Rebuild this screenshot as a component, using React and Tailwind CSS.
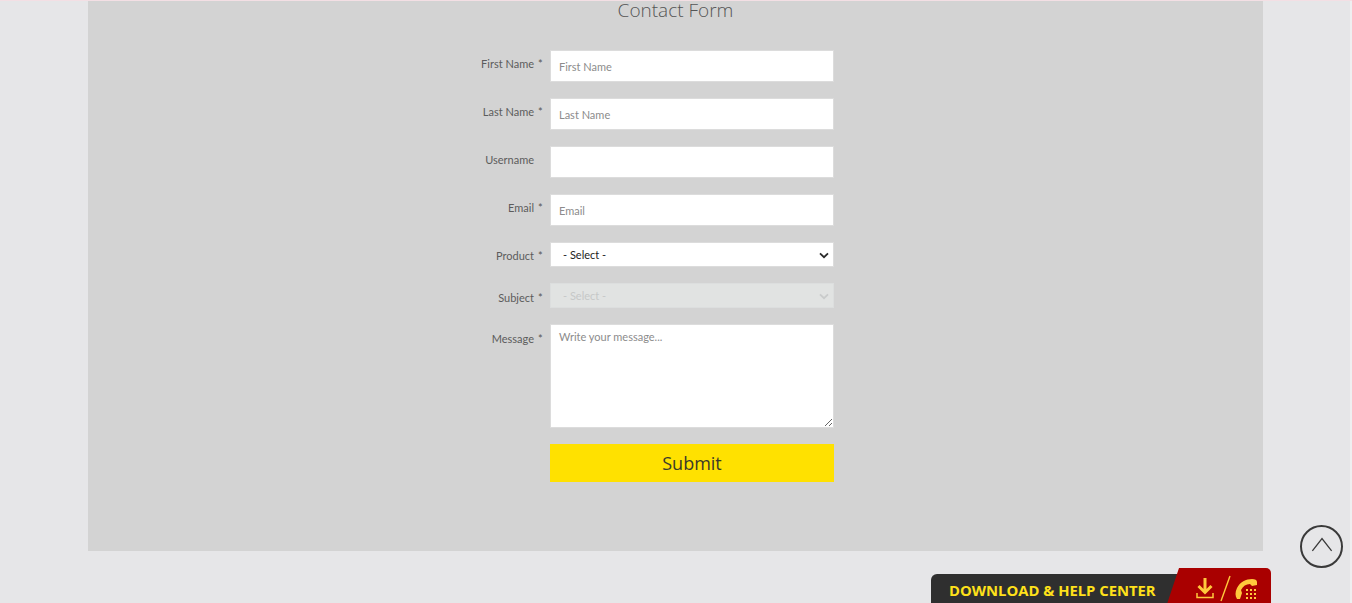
function Label({ text, required, className = "" }) {
  return (
    <div className={`w-[456px] shrink-0 flex justify-end font-['Lato',sans-serif] text-[11px] leading-[16px] text-[#5c5c5c] ${className}`}>
      <span>{text}</span>
      <span className="w-[10px] pl-[4px] text-left text-[#555]">{required ? "*" : ""}</span>
    </div>
  );
}

function InputRow({ label, placeholder, required = true }) {
  return (
    <div className="flex h-[48px] items-start">
      <Label text={label} required={required} className="pt-[6px]" />
      <input
        placeholder={placeholder}
        className="ml-[6px] w-[284px] h-[32px] bg-white border border-[#dcdcdc] px-[8px] pt-[1px] font-['Lato',sans-serif] text-[11px] outline-none placeholder:text-[#8c8c8c]"
      />
    </div>
  );
}

function Chevron({ color }) {
  return (
    <svg viewBox="0 0 12 8" className="w-[10px] h-[7px]">
      <path d="M1.200 1.500 6 6l4.800-4.500" fill="none" stroke={color} strokeWidth="2.200" />
    </svg>
  );
}

function SelectRow({ label, disabled, pt }) {
  return (
    <div className="flex items-start h-[41px]">
      <Label text={label} required className={pt} />
      <div
        className={`ml-[6px] w-[284px] h-[25px] flex items-center justify-between pl-[12px] pr-[4px] pt-[1px] font-['Lato',sans-serif] text-[11px] border ${
          disabled ? "bg-[#e1e3e2] border-[#dcdede] text-[#c6c8c8]" : "bg-white border-[#dcdcdc] text-[#222]"
        }`}
      >
        <span>- Select -</span>
        <Chevron color={disabled ? "#c9cbcb" : "#2a2a2a"} />
      </div>
    </div>
  );
}

export default function App() {
  return (
    <div
      className="relative h-[603px] w-[1352px] overflow-hidden bg-[#e6e6e8] border-t border-[#f3dfe4]"
      style={{ fontFamily: '"Open Sans", "Noto Sans", "Liberation Sans", sans-serif' }}
    >
      <div className="ml-[88px] w-[1175px] h-[550px] bg-[#d3d3d3]">
        <h2 className="h-[49px] text-center text-[19px] leading-[19px] font-light text-[#555]">Contact Form</h2>
        <form className="flex flex-col">
          <InputRow label="First Name" placeholder="First Name" />
          <InputRow label="Last Name" placeholder="Last Name" />
          <InputRow label="Username" required={false} />
          <InputRow label="Email" placeholder="Email" />
          <SelectRow label="Product" pt="pt-[6px]" />
          <SelectRow label="Subject" disabled pt="pt-[7px]" />
          <div className="flex items-start h-[120px]">
            <Label text="Message" required className="pt-[7px]" />
            <textarea
              placeholder="Write your message..."
              className="block ml-[6px] w-[284px] h-[104px] bg-white border border-[#dcdcdc] px-[8px] py-[4px] font-['Lato',sans-serif] text-[11px] outline-none placeholder:text-[#8c8c8c]"
            />
          </div>
          <div className="ml-[462px] w-[284px] h-[38px] bg-[#ffe100] flex items-center justify-center text-[18px] text-[#3a3a2a]">
            Submit
          </div>
        </form>
      </div>

      <div className="absolute right-0 top-0 w-[2px] h-[603px] bg-[#efeff0]" />

      <div className="absolute left-[1300px] top-[524px] w-[43px] h-[43px] rounded-full border-2 border-[#3a3a3a] flex items-center justify-center">
        <svg viewBox="0 0 24 16" className="w-[22px] h-[15px] -mt-[4px]">
          <path d="M1.500 15 12 1.500 22.500 15" fill="none" stroke="#3a3a3a" strokeWidth="1.400" />
        </svg>
      </div>

      <div className="absolute left-[931px] top-[573px] w-[340px] h-[30px]">
        <div className="absolute left-0 top-0 w-[250px] h-[30px] bg-[#2f2f2f] rounded-tl-[6px] flex items-center pl-[18px] pt-[2px] text-[14.800px] font-bold text-[#ffe11a] whitespace-nowrap">
          DOWNLOAD &amp; HELP CENTER
        </div>
        <div className="absolute left-[236px] top-[-6px] w-[104px] h-[36px] bg-[#a90000] rounded-tr-[5px] [clip-path:polygon(12px_0,100%_0,100%_100%,0_100%)]">
          <svg viewBox="0 0 104 36" className="w-[104px] h-[36px]">
            <path d="M38 10v14M31.500 18l6.500 6.500 6.500-6.500" fill="none" stroke="#ffc93c" strokeWidth="3" />
            <path d="M30 25v4.500h16V25" fill="none" stroke="#ffc93c" strokeWidth="1.500" />
            <path d="M54 33 63 8" stroke="#ffc93c" strokeWidth="1.400" />
            <path d="M70 31c-2-3-2-7 0-11 3-6 9-9 15-9 3 0 5 1 5 3v3l-5 1-2-2c-4 0-7 2-9 6l1 3-2 6z" fill="#ffc93c" />
            <g fill="#ffc93c">
              <rect x="79" y="21" width="2" height="2" /><rect x="83" y="21" width="2" height="2" /><rect x="87" y="21" width="2" height="2" />
              <rect x="79" y="25" width="2" height="2" /><rect x="83" y="25" width="2" height="2" /><rect x="87" y="25" width="2" height="2" />
              <rect x="79" y="29" width="2" height="2" /><rect x="83" y="29" width="2" height="2" /><rect x="87" y="29" width="2" height="2" />
            </g>
          </svg>
        </div>
      </div>
    </div>
  );
}
